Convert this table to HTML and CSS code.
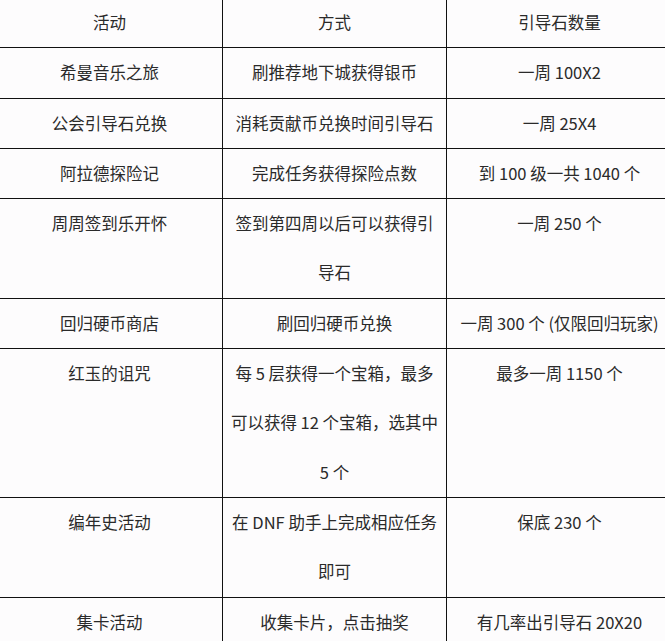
FILE: index.html
```html
<!DOCTYPE html>
<html lang="zh-CN">
<head>
<meta charset="utf-8">
<title>引导石获取途径</title>
<link rel="stylesheet" href="styles.css">
</head>
<body>
<table class="stone-table">
  <colgroup>
    <col class="col-activity">
    <col class="col-method">
    <col class="col-count">
  </colgroup>
  <tbody>
    <tr><td>活动</td><td>方式</td><td>引导石数量</td></tr>
    <tr><td>希曼音乐之旅</td><td>刷推荐地下城获得银币</td><td>一周 100X2</td></tr>
    <tr><td>公会引导石兑换</td><td>消耗贡献币兑换时间引导石</td><td>一周 25X4</td></tr>
    <tr><td>阿拉德探险记</td><td>完成任务获得探险点数</td><td>到 100 级一共 1040 个</td></tr>
    <tr><td>周周签到乐开怀</td><td>签到第四周以后可以获得引导石</td><td>一周 250 个</td></tr>
    <tr><td>回归硬币商店</td><td>刷回归硬币兑换</td><td>一周 300 个 (仅限回归玩家)</td></tr>
    <tr><td>红玉的诅咒</td><td>每 5 层获得一个宝箱，最多可以获得 12 个宝箱，选其中 5 个</td><td>最多一周 1150 个</td></tr>
    <tr><td>编年史活动</td><td>在 DNF 助手上完成相应任务即可</td><td>保底 230 个</td></tr>
    <tr><td>集卡活动</td><td>收集卡片，点击抽奖</td><td>有几率出引导石 20X20</td></tr>
  </tbody>
</table>
</body>
</html>
```
FILE: styles.css
```css
html, body {
  margin: 0;
  padding: 0;
  background: #fdfcfd;
  overflow: hidden;
}

.stone-table {
  margin: -3px 0 0 -4px;
  width: 676px;
  table-layout: fixed;
  border-collapse: collapse;
  font-family: "Noto Sans CJK SC", "Microsoft YaHei", sans-serif;
  font-size: 16.5px;
  color: #2a2a2a;
}

.col-activity { width: 226px; }
.col-method { width: 224px; }
.col-count { width: 226px; }

.stone-table td {
  border: 1px solid #111;
  padding: 0 7px;
  line-height: 49.3px;
  text-align: center;
  vertical-align: top;
  white-space: normal;
}
```
